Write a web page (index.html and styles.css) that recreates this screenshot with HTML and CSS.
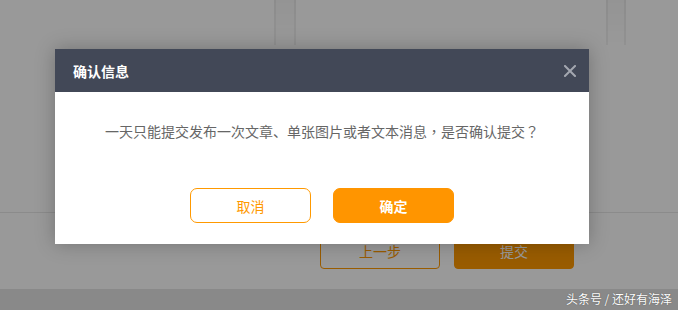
FILE: index.html
```html
<!DOCTYPE html>
<html lang="zh-CN">
<head>
  <title>确认信息</title>
  <meta charset="UTF-8">
  <link rel="stylesheet" href="styles.css">
</head>
<body>
  <div class="page">
    <div class="content">
      <div class="stripe s1"></div>
      <div class="stripe s2"></div>
    </div>
    <div class="actions">
      <button class="btn prev">上一步</button>
      <button class="btn submit">提交</button>
    </div>
    <div class="footer"></div>
  </div>

  <div class="mask"></div>

  <div class="dialog">
    <div class="dialog-head">
      <span class="dialog-title">确认信息</span>
      <svg class="close" width="12" height="12" viewBox="0 0 12 12">
        <path d="M1 1L11 11M11 1L1 11" stroke="#a3a7b0" stroke-width="2" stroke-linecap="square"/>
      </svg>
    </div>
    <div class="dialog-body">
      <p class="msg">一天只能提交发布一次文章、单张图片或者文本消息<span class="punct" lang="zh-TW">，</span>是否确认提交<span class="punct" lang="zh-TW">？</span></p>
      <div class="dialog-btns">
        <button class="dbtn cancel">取消</button>
        <button class="dbtn ok">确定</button>
      </div>
    </div>
  </div>

  <div class="mark">头条号 / 还好有海泽</div>
</body>
</html>
```

FILE: styles.css
```css
body{
  margin:0;
  font-family:"Noto Sans CJK SC","Microsoft YaHei",sans-serif;
  background:#fff;
  width:678px;
  height:310px;
  overflow:hidden;
}
.page{
  display:flex;
  flex-direction:column;
  height:310px;
}
.content{
  position:relative;
  height:212px;
  border-bottom:1px solid #e8e8e8;
}
.stripe{
  position:absolute;
  top:0;
  height:45px;
  border-left:2px solid rgba(0,0,0,0.05);
  border-right:2px solid rgba(0,0,0,0.05);
  background:linear-gradient(to bottom, rgba(0,0,0,0.03), rgba(0,0,0,0));
}
.s1{ left:274px; width:18px; }
.s2{ left:606px; width:16px; }
.actions{
  display:flex;
  justify-content:flex-end;
  gap:14px;
  padding:20px 104px 0 0;
  height:56px;
}
.btn{
  width:120px;
  height:36px;
  border-radius:4px;
  font-family:inherit;
  font-size:14px;
  border:1px solid #ff9900;
}
.prev{
  background:#fff;
  color:#ff9900;
}
.submit{
  background:#ff9900;
  color:#fff;
}
.footer{
  flex:1;
  background:#e4e4e4;
}
.mask{
  position:absolute;
  left:0;
  top:0;
  width:678px;
  height:310px;
  background:rgba(0,0,0,0.4);
}
.dialog{
  position:absolute;
  left:55px;
  top:49px;
  width:534px;
  background:#fff;
  box-shadow:0 0 18px rgba(0,0,0,0.25);
}
.dialog-head{
  height:43px;
  background:#424857;
  display:flex;
  align-items:center;
  justify-content:space-between;
  padding:0 13px 0 18px;
}
.dialog-title{
  color:#fff;
  font-size:14px;
  font-weight:bold;
}
.dialog-body{
  display:flex;
  flex-direction:column;
  align-items:center;
  padding:29px 0 21px;
}
.msg{
  margin:0;
  height:20px;
  line-height:20px;
  font-size:14px;
  color:#666;
}
.punct{
  font-family:"Noto Sans CJK TC",sans-serif;
}
.dialog-btns{
  display:flex;
  gap:22px;
  margin-top:47px;
}
.dbtn{
  width:121px;
  height:35px;
  border-radius:7px;
  font-family:inherit;
  font-size:14px;
}
.cancel{
  background:#fff;
  border:1px solid #ff9900;
  color:#ff9900;
}
.ok{
  background:#ff9500;
  border:1px solid #ff9500;
  color:#fff;
  font-weight:bold;
}
.mark{
  position:absolute;
  right:6px;
  top:290px;
  color:#fff;
  font-size:12px;
  line-height:18px;
  text-shadow:0 0 1px rgba(0,0,0,0.5);
}
```
